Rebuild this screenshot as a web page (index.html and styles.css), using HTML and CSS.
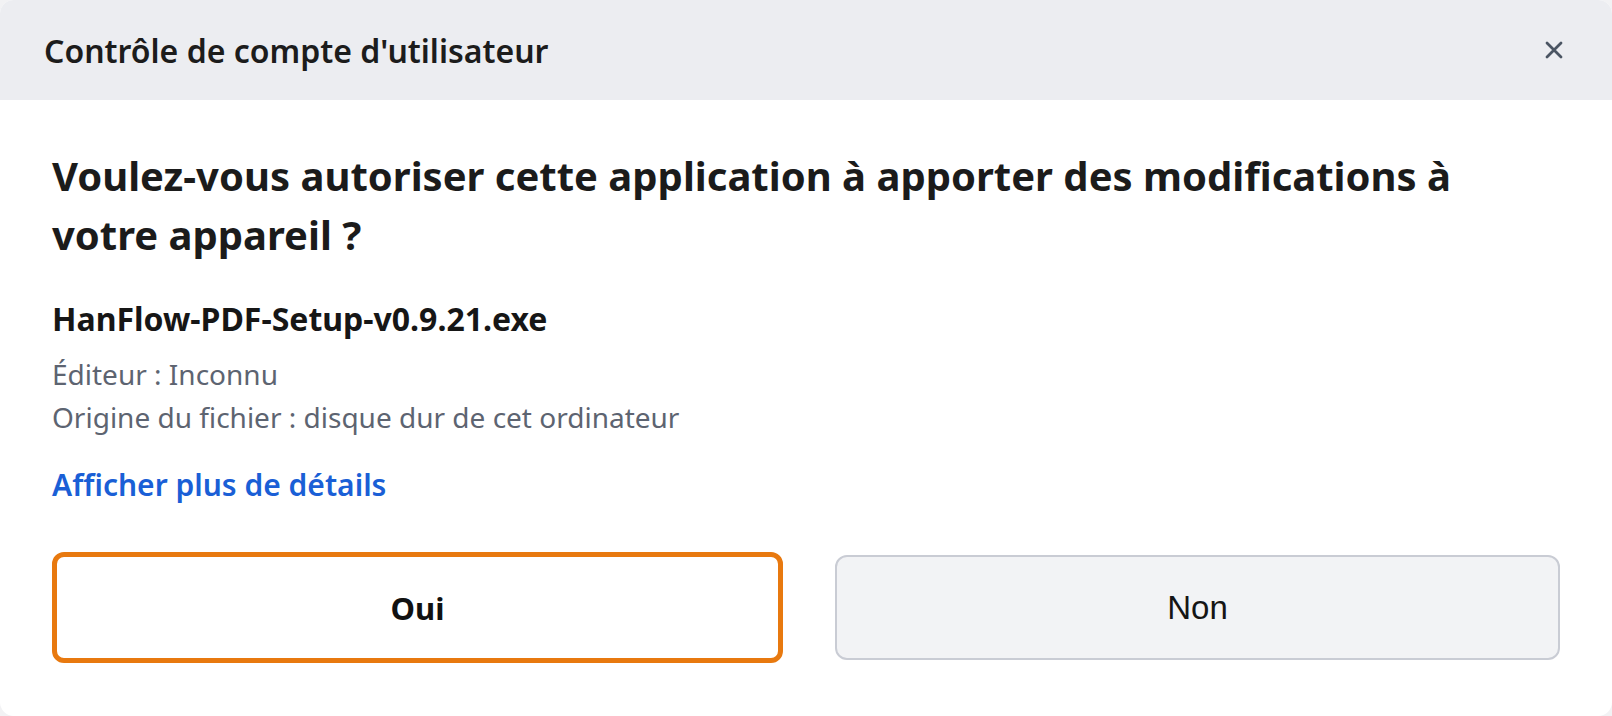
FILE: index.html
```html
<!DOCTYPE html>
<html lang="fr">
<head>
<meta charset="utf-8">
<title>Contrôle de compte d'utilisateur</title>
<link rel="stylesheet" href="styles.css">
</head>
<body>
<div class="dialog">
  <header class="titlebar">
    <h1 class="titlebar-text">Contrôle de compte d'utilisateur</h1>
    <button class="close" aria-label="Fermer">
      <svg width="20" height="20" viewBox="0 0 20 20"><path d="M3 3 L17 17 M17 3 L3 17" stroke="#4b5563" stroke-width="2.8" stroke-linecap="round" fill="none"/></svg>
    </button>
  </header>
  <main class="content">
    <h2 class="question">Voulez-vous autoriser cette application à apporter des modifications à votre appareil ?</h2>
    <p class="filename">HanFlow-PDF-Setup-v0.9.21.exe</p>
    <div class="meta">
      <p>Éditeur : Inconnu</p>
      <p>Origine du fichier : disque dur de cet ordinateur</p>
    </div>
    <a class="details" href="#">Afficher plus de détails</a>
    <div class="actions">
      <button class="btn btn-yes">Oui</button>
      <button class="btn btn-no">Non</button>
    </div>
  </main>
</div>
</body>
</html>
```

FILE: styles.css
```css
* { box-sizing: border-box; }
html, body {
  margin: 0;
  padding: 0;
  background: #f2f2f4;
}
body {
  font-family: "Noto Sans", "Open Sans", sans-serif;
}
.dialog {
  width: 1612px;
  height: 716px;
  background: #ffffff;
  border-radius: 14px;
  overflow: hidden;
  display: flex;
  flex-direction: column;
}
.titlebar {
  height: 100px;
  flex: none;
  background: #ecedf1;
  display: flex;
  align-items: center;
  justify-content: space-between;
  padding: 0 44px 0 44px;
}
.titlebar-text {
  margin: 0;
  font-size: 32px;
  font-weight: 600;
  color: #1c1c1c;
}
.close {
  border: none;
  background: transparent;
  padding: 0;
  width: 24px;
  height: 24px;
  display: flex;
  align-items: center;
  justify-content: center;
  margin-right: 2px;
}
.content {
  padding: 46px 52px 0 52px;
  display: flex;
  flex-direction: column;
  align-items: flex-start;
}
.question {
  margin: 0;
  font-size: 40px;
  line-height: 59px;
  font-weight: 700;
  color: #1b1b1b;
  max-width: 1460px;
}
.filename {
  margin: 37px 0 0 0;
  font-size: 32px;
  line-height: 36px;
  font-weight: 700;
  color: #161616;
}
.meta {
  margin-top: 16px;
}
.meta p {
  margin: 0;
  font-size: 28px;
  line-height: 43px;
  color: #5d6471;
}
.details {
  margin-top: 28px;
  font-size: 30px;
  line-height: 36px;
  font-weight: 600;
  color: #1a5fd6;
  text-decoration: none;
}
.actions {
  margin-top: 49px;
  width: 100%;
  display: grid;
  grid-template-columns: 731px 1fr;
  column-gap: 52px;
  align-items: center;
}
.btn {
  border-radius: 12px;
  cursor: pointer;
}
.btn-yes {
  height: 111px;
  background: #ffffff;
  border: 5px solid #e8790f;
  font-family: "Noto Sans", sans-serif;
  font-weight: 700;
  font-size: 31px;
  color: #111111;
}
.btn-no {
  height: 105px;
  background: #f2f3f5;
  border: 2px solid #c9ccd4;
  font-family: "Liberation Sans", Arial, sans-serif;
  font-size: 33px;
  color: #151515;
}
```
